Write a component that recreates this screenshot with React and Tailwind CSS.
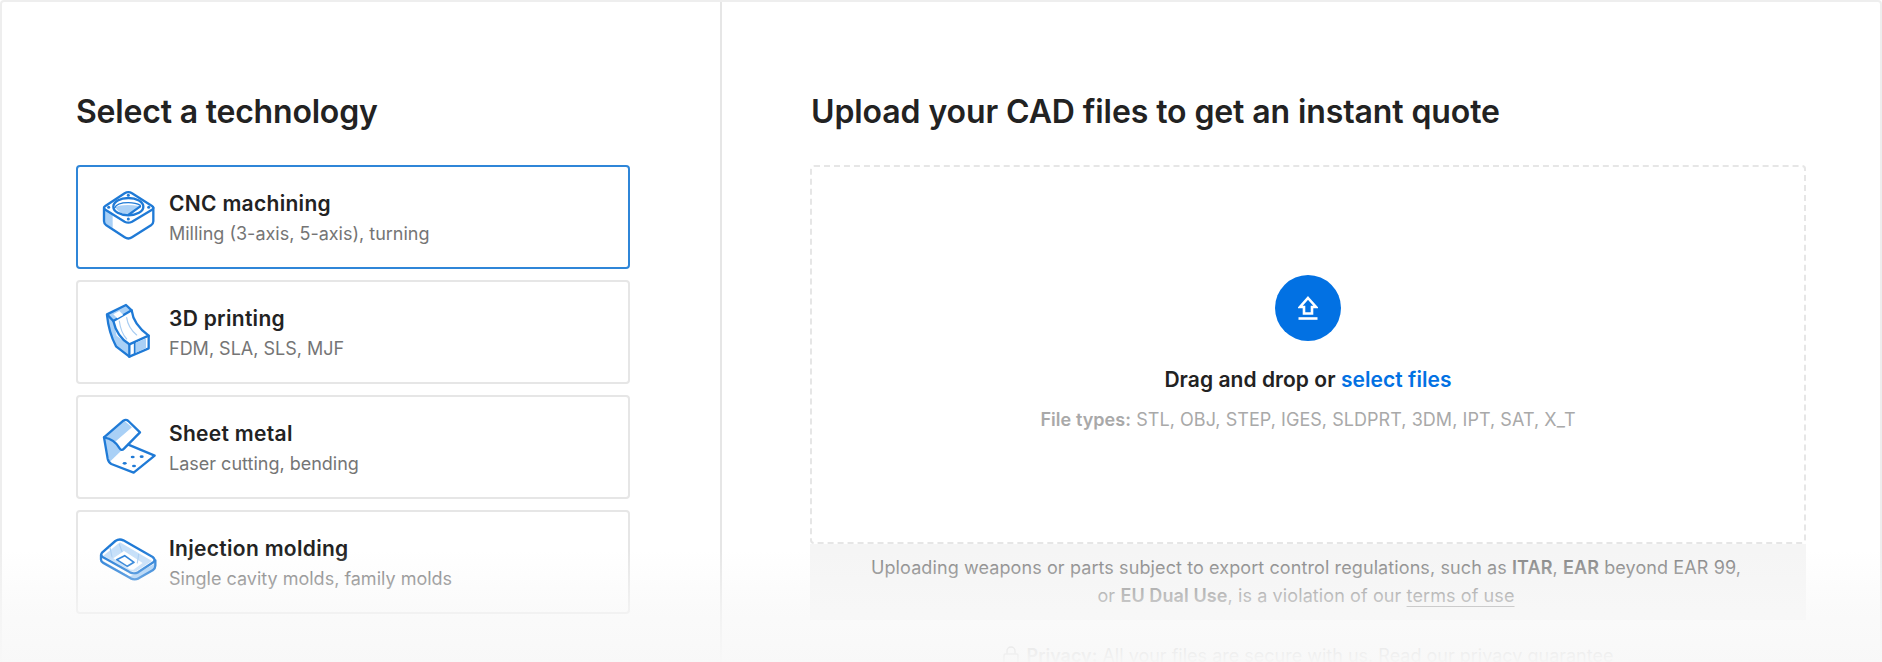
import React from "react";

const BLUE = "#1f7ad6";
const LIGHT = "#a9d0f6";
const line = { fill: "none", stroke: BLUE, strokeWidth: 7, strokeLinejoin: "round", strokeLinecap: "round" };
const thin = { ...line, strokeWidth: 3.5, stroke: "#a9cdf2" };
const Box = ({ children }) => (
  <svg width="66" height="66" viewBox="0 0 198 198" className="shrink-0">{children}</svg>
);
const Dot = ({ x, y, r = 4.5 }) => <circle cx={x} cy={y} r={r} fill={BLUE} />;

function CncIcon() {
  return (
    <Box>
      <path d="M25 72 V116 L50 132 V88 Z" fill={LIGHT} />
      <path d="M28 66 L86 28 Q97 21 108 28 L168 66 Q176 71 168 77 L108 113 Q97 119 86 113 L28 77 Q20 71 28 66 Z" {...line} />
      <path d="M24 72 V112 Q24 119 31 124 L86 160 Q97 167 108 160 L165 124 Q172 119 172 112 V72" {...line} />
      <path d="M58 70 Q80 58 130 66 L108 92 Q70 94 58 70 Z" fill={LIGHT} />
      <ellipse cx="97" cy="68" rx="45" ry="26" {...line} />
      <path d="M56 72 Q62 56 97 56 Q120 56 133 64" {...line} strokeWidth="4" />
      <path d="M98 92 L132 68" {...line} />
      <Dot x={97} y={34} /><Dot x={38} y={70} /><Dot x={158} y={70} /><Dot x={97} y={105} />
    </Box>
  );
}
function PrintIcon() {
  return (
    <Box>
      <path d="M33 46 L90 18 L107 34 L52 66 L62 110 L98 136 V172 L60 142 L42 94 Z" fill={LIGHT} />
      <path d="M33 46 L90 18 L107 34 L52 66 Z" fill={LIGHT} {...line} />
      <path d="M52 46 L70 36 L82 48 L64 58 Z" fill="#fff" />
      <path d="M33 48 Q38 100 60 142 L100 173 L158 148 V110 Q112 76 107 34" {...line} />
      <path d="M52 66 Q62 112 100 136 V173" {...line} />
      <path d="M100 136 L158 110" {...line} />
      <path d="M118 132 L150 118 V148 L118 162 Z" fill={LIGHT} />
      <path d="M116 130 V164" {...line} strokeWidth="5" />
      <path d="M70 66 Q74 100 92 120 M92 56 Q96 86 122 108" {...thin} />
    </Box>
  );
}
function SheetIcon() {
  return (
    <Box>
      <path d="M24 70 L40 145 L78 108 Q62 76 24 70 Z" fill={LIGHT} />
      <path d="M28 66 L85 20 L108 40 L54 86 Q44 72 28 66 Z" fill={LIGHT} />
      <path d="M24 70 L82 20 Q90 15 97 21 L132 55 L84 104 Q76 112 70 102 Q56 76 24 70 Z" {...line} />
      <path d="M97 92 L176 125 L113 176 L46 150 Q38 146 35 134 L24 70" {...line} />
      <ellipse cx="110" cy="129" rx="6" ry="4" fill={BLUE} /><ellipse cx="137" cy="128" rx="6" ry="4" fill={BLUE} />
      <ellipse cx="86" cy="148" rx="6" ry="4" fill={BLUE} /><ellipse cx="114" cy="156" rx="6" ry="4" fill={BLUE} />
    </Box>
  );
}
function MoldIcon() {
  return (
    <Box>
      <path d="M22 80 L72 40 L168 96 L118 128 Q108 130 98 124 Z" fill="#c5dff9" />
      <path d="M52 88 L84 66 L140 102 L112 122 Q104 124 96 118 Z" fill="#fff" />
      <path d="M15 92 L100 142 L118 136 L176 104 V122 L124 152 L108 150 L18 98 Z" fill={LIGHT} />
      <path d="M19 70 L58 36 Q70 28 82 34 L170 84 Q180 92 172 100 L126 130 Q114 136 102 130 L20 84 Q12 78 19 70 Z" {...line} />
      <path d="M15 78 V92 Q15 98 22 102 L104 148 Q116 154 128 148 L170 124 Q178 118 178 110 V94" {...line} />
      <path d="M62 92 L86 80 L114 100 L94 112 Z" {...line} strokeWidth="5" />
      <path d="M42 56 L48 84 M70 46 L78 68 M128 76 L124 102" {...thin} />
    </Box>
  );
}

const items = [
  { title: "CNC machining", sub: "Milling (3-axis, 5-axis), turning", Icon: CncIcon, active: true },
  { title: "3D printing", sub: "FDM, SLA, SLS, MJF", Icon: PrintIcon },
  { title: "Sheet metal", sub: "Laser cutting, bending", Icon: SheetIcon },
  { title: "Injection molding", sub: "Single cavity molds, family molds", Icon: MoldIcon },
];

export default function App() {
  return (
    <div className="relative h-[662px] overflow-hidden bg-white text-[#222] font-['Inter','Noto_Sans',sans-serif]">
      <div className="flex h-[700px] border-2 border-[#eeeeee] rounded-[4px]">
        <div className="w-[720px] shrink-0 border-r-2 border-[#e6e6e6] pl-[74px] pr-[90px] pt-[90px]">
          <h2 className="text-[32px] leading-[40px] font-semibold tracking-[-0.2px] mb-[33px]">Select a technology</h2>
          <div className="flex flex-col gap-[11px]">
            {items.map(({ title, sub, Icon, active }) => (
              <div key={title} className={`h-[104px] rounded-[4px] border-2 flex items-center pl-[18px] gap-[7px] ${active ? "border-[#2f86d8]" : "border-[#e6e6e6]"}`}>
                <Icon />
                <div className="pt-[3px]">
                  <div className="text-[21px] leading-[30px] font-semibold tracking-[0.3px]">{title}</div>
                  <div className="mt-[1px] text-[18px] leading-[28px] text-[#757575]">{sub}</div>
                </div>
              </div>
            ))}
          </div>
        </div>
        <div className="flex-1 pl-[88px] pr-[74px] pt-[90px]">
          <h2 className="pl-[1px] text-[32px] leading-[40px] font-semibold tracking-[-0.1px] mb-[33px]">Upload your CAD files to get an instant quote</h2>
          <div className="h-[379px] border-2 border-dashed border-[#e6e6e6] rounded-[4px] flex flex-col items-center pt-[108px]">
            <div className="w-[66px] h-[66px] rounded-full bg-[#0271e3] flex items-center justify-center">
              <svg width="20" height="24" viewBox="0 0 20 24" fill="none" stroke="#fff" strokeWidth="2.6">
                <path d="M10 2 L18 11 H14 V17.5 H6 V11 H2 Z" />
                <path d="M0.5 22.5 H19.5" />
              </svg>
            </div>
            <div className="mt-[24px] text-[21px] leading-[30px] font-semibold tracking-[0.05px]">
              Drag and drop or <span className="text-[#0271e3]">select files</span>
            </div>
            <div className="mt-[11px] text-[18px] leading-[28px] text-[#a9a9a9] tracking-[0.05px]">
              <b className="font-semibold">File types:</b> STL, OBJ, STEP, IGES, SLDPRT, 3DM, IPT, SAT, X_T
            </div>
          </div>
          <div className="bg-[#f5f5f5] h-[76px] text-center text-[18px] leading-[28px] text-[#808080] pt-[10px] pr-[4px] tracking-[0.1px]">
            <div>Uploading weapons or parts subject to export control regulations, such as <b className="font-semibold">ITAR</b>, <b className="font-semibold">EAR</b> beyond EAR 99,</div>
            <div>or <b className="font-semibold">EU Dual Use</b>, is a violation of our <span className="underline underline-offset-4">terms of use</span></div>
          </div>
          <div className="mt-[22px] flex justify-center items-center gap-[8px] text-[18px] leading-[28px] text-[#8a8a8a]">
            <svg width="16" height="20" viewBox="0 0 16 20" fill="none" stroke="#8a8a8a" strokeWidth="1.5"><rect x="1" y="8" width="14" height="11" rx="1.5" /><path d="M4 8 V5 a4 4 0 0 1 8 0 V8" /></svg>
            <span><b className="font-semibold">Privacy:</b> All your files are secure with us. Read our privacy guarantee</span>
          </div>
        </div>
      </div>
      <div className="absolute inset-x-0 bottom-0 h-[112px] bg-gradient-to-b from-[#f8f8f800] via-[#f8f8f8a0] to-[#f8f8f8f8] pointer-events-none" />
    </div>
  );
}
